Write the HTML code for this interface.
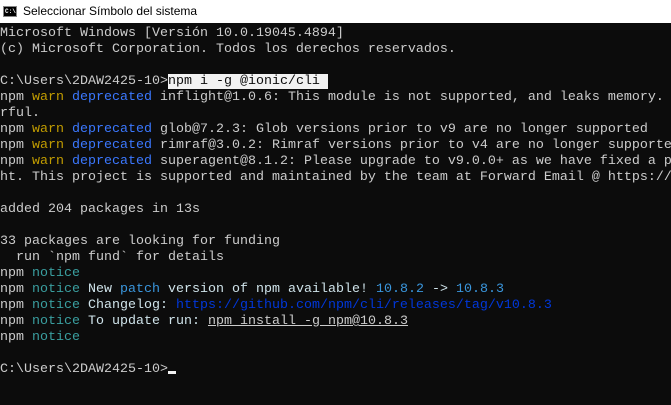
<!DOCTYPE html>
<html><head><meta charset="utf-8"><style>
html,body{margin:0;padding:0;width:671px;height:405px;overflow:hidden;background:#0c0c0c}
#t{position:absolute;left:0;top:0;width:671px;height:23px;background:#fff;font:12px "Liberation Sans",sans-serif;color:#000}
#t span{position:absolute;left:23px;top:4px}
#ic{position:absolute;left:3px;top:6px;width:14px;height:11px;background:#000;border:1px solid #888;box-sizing:border-box;color:#fff;font:bold 6px "Liberation Mono",monospace;line-height:9px;padding-left:1px}
pre{position:absolute;left:0;top:26px;margin:0;font:13.33px/16px "Liberation Mono",monospace;color:#cccccc;white-space:pre}
.y{color:#c19c00}.b{color:#3b78ff}.c{color:#3a9fa0}.l{color:#cfe3ea}.p{color:#3a96dd}.u{color:#0037da}
.sel{background:#f2f2f2;color:#0c0c0c}
.cur{display:inline-block;width:8px;height:3px;background:#f2f2f2;vertical-align:-2px}
</style></head><body>
<div id="t"><div id="ic">C:\</div><span>Seleccionar Símbolo del sistema</span></div>
<pre>Microsoft Windows [Versión 10.0.19045.4894]
(c) Microsoft Corporation. Todos los derechos reservados.

C:\Users\2DAW2425-10&gt;<span class="sel">npm i -g @ionic/cli </span>
npm <span class="y">warn</span> <span class="b">deprecated</span> inflight@1.0.6: This module is not supported, and leaks memory.
rful.
npm <span class="y">warn</span> <span class="b">deprecated</span> glob@7.2.3: Glob versions prior to v9 are no longer supported
npm <span class="y">warn</span> <span class="b">deprecated</span> rimraf@3.0.2: Rimraf versions prior to v4 are no longer supporte
npm <span class="y">warn</span> <span class="b">deprecated</span> superagent@8.1.2: Please upgrade to v9.0.0+ as we have fixed a p
ht. This project is supported and maintained by the team at Forward Email @ https://

added 204 packages in 13s

33 packages are looking for funding
  run `npm fund` for details
npm <span class="c">notice</span>
npm <span class="c">notice</span> <span class="l">New</span> <span class="p">patch</span> <span class="l">version of npm available!</span> <span class="p">10.8.2</span> <span class="l">-&gt;</span> <span class="p">10.8.3</span>
npm <span class="c">notice</span> <span class="l">Changelog:</span> <span class="u">https://github.com/npm/cli/releases/tag/v10.8.3</span>
npm <span class="c">notice</span> <span class="l">To update run:</span> <span style="text-decoration:underline">npm install -g npm@10.8.3</span>
npm <span class="c">notice</span>

C:\Users\2DAW2425-10&gt;<span class="cur"></span></pre>
</body></html>
